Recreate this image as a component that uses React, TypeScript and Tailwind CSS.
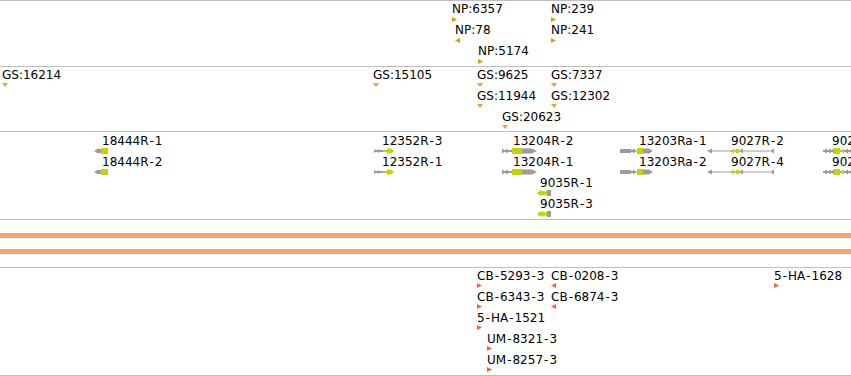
import React from "react";

type Dir = "right" | "left" | "down";
type Mark = { label: string; x: number; row: number; dir: Dir };
type Gene = { label: string; x: number; gx: number; row: number; kind: string };

const GRAY = "#9c9c9c";
const LIME = "#c6d300";

const np: Mark[] = [
  { label: "NP:6357", x: 452, row: 0, dir: "right" },
  { label: "NP:239", x: 551, row: 0, dir: "right" },
  { label: "NP:78", x: 455, row: 1, dir: "left" },
  { label: "NP:241", x: 551, row: 1, dir: "right" },
  { label: "NP:5174", x: 478, row: 2, dir: "right" },
];

const gs: Mark[] = [
  { label: "GS:16214", x: 2, row: 0, dir: "down" },
  { label: "GS:15105", x: 373, row: 0, dir: "down" },
  { label: "GS:9625", x: 477, row: 0, dir: "down" },
  { label: "GS:7337", x: 551, row: 0, dir: "down" },
  { label: "GS:11944", x: 477, row: 1, dir: "down" },
  { label: "GS:12302", x: 551, row: 1, dir: "down" },
  { label: "GS:20623", x: 502, row: 2, dir: "down" },
];

const probes: Mark[] = [
  { label: "CB-5293-3", x: 477, row: 0, dir: "right" },
  { label: "CB-0208-3", x: 551, row: 0, dir: "left" },
  { label: "CB-6343-3", x: 477, row: 1, dir: "right" },
  { label: "CB-6874-3", x: 551, row: 1, dir: "left" },
  { label: "5-HA-1521", x: 477, row: 2, dir: "right" },
  { label: "UM-8321-3", x: 487, row: 3, dir: "right" },
  { label: "UM-8257-3", x: 487, row: 4, dir: "right" },
  { label: "5-HA-1628", x: 774, row: 0, dir: "right" },
];

const genes: Gene[] = [
  { label: "18444R-1", x: 102, gx: 94, row: 0, kind: "a" },
  { label: "18444R-2", x: 102, gx: 94, row: 1, kind: "a" },
  { label: "12352R-3", x: 382, gx: 374, row: 0, kind: "b" },
  { label: "12352R-1", x: 382, gx: 374, row: 1, kind: "b" },
  { label: "13204R-2", x: 513, gx: 502, row: 0, kind: "c" },
  { label: "13204R-1", x: 513, gx: 502, row: 1, kind: "c" },
  { label: "9035R-1", x: 540, gx: 537, row: 2, kind: "d" },
  { label: "9035R-3", x: 540, gx: 537, row: 3, kind: "d" },
  { label: "13203Ra-1", x: 639, gx: 620, row: 0, kind: "e" },
  { label: "13203Ra-2", x: 639, gx: 620, row: 1, kind: "e" },
  { label: "9027R-2", x: 731, gx: 707, row: 0, kind: "f" },
  { label: "9027R-4", x: 731, gx: 707, row: 1, kind: "f" },
  { label: "9027R-1", x: 832, gx: 823, row: 0, kind: "g" },
  { label: "9027R-3", x: 832, gx: 823, row: 1, kind: "g" },
];

// the viewer draws its dashes a little wider than a plain hyphen
const Label = ({ text }: { text: string }) => (
  <>
    {text.split("-").map((part, i) => (
      <React.Fragment key={i}>
        {i > 0 && <span className="px-[1px]">-</span>}
        {part}
      </React.Fragment>
    ))}
  </>
);

const Marker = ({ dir, color }: { dir: Dir; color: string }) => {
  if (dir === "down")
    return (
      <svg width="6" height="4" viewBox="0 0 6 4">
        <polygon points="0,0 6,0 3,4" fill={color} />
      </svg>
    );
  return (
    <svg width="5" height="5" viewBox="0 0 5 5">
      <polygon points={dir === "right" ? "0,0 5,2.5 0,5" : "5,0 0,2.5 5,5"} fill={color} />
    </svg>
  );
};

const Glyph = ({ kind }: { kind: string }) => {
  switch (kind) {
    case "a":
      return (
        <svg width="14" height="6" viewBox="0 0 14 6">
          <polygon points="0,3 4,0.5 4,5.5" fill={GRAY} />
          <rect x="4" y="1" width="3" height="4" fill={GRAY} />
          <rect x="7" y="0" width="7" height="6" fill={LIME} />
        </svg>
      );
    case "b":
      return (
        <svg width="20" height="6" viewBox="0 0 20 6">
          <rect x="0" y="2" width="9" height="2" fill={GRAY} />
          <polygon points="0,1 3,3 0,5" fill={GRAY} />
          <polygon points="4,1 7,3 4,5" fill={GRAY} />
          <rect x="9" y="2" width="4" height="2" fill={LIME} />
          <polygon points="13,0.5 17,0.5 20,3 17,5.5 13,5.5" fill={LIME} />
        </svg>
      );
    case "c":
      return (
        <svg width="35" height="6" viewBox="0 0 35 6">
          <rect x="0" y="2" width="10" height="2" fill={GRAY} />
          <polygon points="0,0.5 4,3 0,5.5" fill={GRAY} />
          <polygon points="4,0.5 8,3 4,5.5" fill={GRAY} />
          <rect x="10" y="0" width="10" height="6" fill={LIME} />
          <polygon points="20,0.5 30,0.5 35,3 30,5.5 20,5.5" fill={GRAY} />
        </svg>
      );
    case "d":
      return (
        <svg width="14" height="6" viewBox="0 0 14 6">
          <polygon points="0,3 3,0.5 5,0.5 5,5.5 3,5.5" fill={LIME} />
          <rect x="5" y="0.5" width="3" height="5" rx="1.5" fill={LIME} />
          <polygon points="7,3 10,0.5 10,5.5" fill={LIME} />
          <rect x="10" y="0" width="4" height="6" fill={GRAY} />
        </svg>
      );
    case "e":
      return (
        <svg width="33" height="6" viewBox="0 0 33 6">
          <rect x="0" y="1" width="11" height="4" fill={GRAY} />
          <rect x="11" y="2" width="3" height="2" fill={GRAY} />
          <polygon points="13,0.5 17,3 13,5.5" fill={GRAY} />
          <rect x="17" y="0" width="6" height="6" fill={LIME} />
          <polygon points="23,0.5 29,0.5 33,3 29,5.5 23,5.5" fill={GRAY} />
        </svg>
      );
    case "f":
      return (
        <svg width="67" height="6" viewBox="0 0 67 6">
          <polygon points="0,3 5,0.5 5,5.5" fill={GRAY} />
          <rect x="5" y="2.5" width="58" height="1" fill={GRAY} />
          <polygon points="23,3 27,0.5 27,5.5" fill={LIME} />
          <polygon points="27,3 31,0.5 31,5.5" fill={LIME} />
          <rect x="29" y="1" width="3" height="4" fill={LIME} />
          <polygon points="32,3 36,0.5 36,5.5" fill={GRAY} />
          <polygon points="63,3 67,0.5 67,5.5" fill={GRAY} />
        </svg>
      );
    default:
      return (
        <svg width="30" height="6" viewBox="0 0 30 6">
          <rect x="0" y="2" width="30" height="2" fill={GRAY} />
          <polygon points="0,3 4,0.5 4,5.5" fill={GRAY} />
          <polygon points="4,3 8,0.5 8,5.5" fill={GRAY} />
          <polygon points="8,3 11,0.5 11,5.5" fill={GRAY} />
          <rect x="11" y="0" width="6" height="6" fill={LIME} />
          <polygon points="17,3 21,0.5 21,5.5" fill={LIME} />
          <polygon points="21,3 25,0.5 25,5.5" fill={GRAY} />
          <polygon points="25,3 29,0.5 29,5.5" fill={GRAY} />
        </svg>
      );
  }
};

// point features: a label with its strand marker under it
const MarkTrack = ({ items, color, base, markTop }: { items: Mark[]; color: string; base: number; markTop: number }) => (
  <>
    {items.map((m) => (
      <React.Fragment key={m.label}>
        <div className="absolute whitespace-nowrap" style={{ left: m.x, top: base + m.row * 21 }}>
          <Label text={m.label} />
        </div>
        <div className="absolute flex" style={{ left: m.x, top: markTop + m.row * 21 }}>
          <Marker dir={m.dir} color={color} />
        </div>
      </React.Fragment>
    ))}
  </>
);

export default function App() {
  return (
    <div className="flex h-[376px] w-[851px] flex-col overflow-hidden bg-white font-['DejaVu_Sans',sans-serif] text-[12px] leading-[12px] text-black">
      <div className="relative h-[66px] border-t border-[#bebebe]">
        <MarkTrack items={np} color="#d39a12" base={2} markTop={16} />
      </div>
      <div className="relative h-[65px] border-t border-[#bebebe]">
        <MarkTrack items={gs} color="#eaa52a" base={2} markTop={16} />
      </div>
      <div className="relative h-[88px] border-t border-[#bebebe]">
        {genes.map((g) => (
          <React.Fragment key={g.label}>
            <div className="absolute whitespace-nowrap" style={{ left: g.x, top: 3 + g.row * 21 }}>
              <Label text={g.label} />
            </div>
            <div className="absolute flex" style={{ left: g.gx, top: 16 + g.row * 21 }}>
              <Glyph kind={g.kind} />
            </div>
          </React.Fragment>
        ))}
      </div>
      <div className="flex h-[48px] flex-col gap-[11px] border-t border-[#bebebe] pt-[13px]">
        <div className="h-[5px] w-full bg-[#f4a470]" />
        <div className="h-[5px] w-full bg-[#f4a470]" />
      </div>
      <div className="relative h-[109px] border-y border-[#bebebe]">
        <MarkTrack items={probes} color="#f2603e" base={2} markTop={15} />
      </div>
    </div>
  );
}
